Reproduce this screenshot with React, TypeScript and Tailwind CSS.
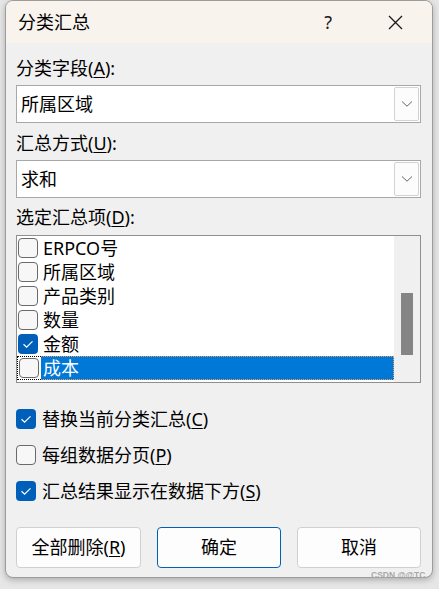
import React from "react";

const FONT = "font-['Segoe_UI','Noto_Sans','Noto_Sans_CJK_SC',sans-serif]";

function Check({ checked }: { checked: boolean }) {
  if (checked) {
    return (
      <div className="w-[20px] h-[20px] rounded-[4px] bg-[#005fb8] flex items-center justify-center shrink-0">
        <svg width="20" height="20" viewBox="0 0 20 20">
          <path d="M5.5 10.2 L8.6 13.2 L14.5 7.3" fill="none" stroke="#ffffff" strokeWidth="1.2" />
        </svg>
      </div>
    );
  }
  return <div className="w-[20px] h-[20px] rounded-[4px] border border-[#6a6a6a] bg-[#f7f7f7] shrink-0" />;
}

function Select({ value }: { value: string }) {
  return (
    <div className="h-[38px] border border-[#a8a8a8] bg-white flex items-center">
      <span className="pl-[4px] text-[18px] leading-[24px] text-black">{value}</span>
      <div className="ml-auto mr-[1px] w-[25px] h-[34px] border border-[#d2d2d2] rounded-[2px] bg-[#fcfcfc] flex items-center justify-center">
        <svg width="12" height="8" viewBox="0 0 12 8">
          <path d="M1 1.5 L6 6.2 L11 1.5" fill="none" stroke="#666" strokeWidth="1" />
        </svg>
      </div>
    </div>
  );
}

function Label({ text, key1, suffix }: { text: string; key1: string; suffix: string }) {
  return (
    <div className="h-[24px] text-[18px] leading-[24px] text-black">
      {text}(<span className="underline underline-offset-2">{key1}</span>){suffix}
    </div>
  );
}

const items = ["ERPCO号", "所属区域", "产品类别", "数量", "金额", "成本"];

export default function App() {
  return (
    <div className={`${FONT} w-[439px] h-[589px] bg-[#e6e6e6] relative overflow-hidden`}>
      <div className="ml-[5px] w-[428px] h-[578px] bg-[#f0f0f0] border border-[#9c9c9c] rounded-[8px] overflow-hidden flex flex-col shadow-[0_2px_6px_rgba(0,0,0,0.25)]">
        <div className="h-[42px] bg-[#f8f3ed] flex items-center shrink-0">
          <span className="ml-[12px] text-[18px] leading-[24px] text-black">分类汇总</span>
          <span className="ml-auto mr-[56px] text-[18px] leading-[24px] text-[#1a1a1a]">?</span>
          <svg className="mr-[29px]" width="15" height="15" viewBox="0 0 15 15">
            <path d="M1 1 L14 14 M14 1 L1 14" stroke="#1a1a1a" strokeWidth="1.3" />
          </svg>
        </div>
        <div className="pl-[10px] pr-[11px] flex flex-col">
          <div className="mt-[13px]">
            <Label text="分类字段" key1="A" suffix=":" />
          </div>
          <div className="mt-[5px]">
            <Select value="所属区域" />
          </div>
          <div className="mt-[8px]">
            <Label text="汇总方式" key1="U" suffix=":" />
          </div>
          <div className="mt-[5px]">
            <Select value="求和" />
          </div>
          <div className="mt-[7px]">
            <Label text="选定汇总项" key1="D" suffix=":" />
          </div>
          <div className="mt-[6px] h-[148px] border border-[#8f8f8f] bg-white flex">
            <div className="flex-1 flex flex-col">
              {items.map((it, i) => {
                const last = i === items.length - 1;
                if (last) {
                  return (
                    <div key={it} className="h-[24px] flex items-stretch">
                      <div className="flex items-center pl-[1px] pr-[2px] border-l border-y border-dotted border-black">
                        <Check checked={false} />
                      </div>
                      <div className="flex-1 bg-[#0078d7] flex items-center pl-[2px] border-y border-r border-dotted border-[#f0a050] text-white text-[18px] leading-[24px]">
                        {it}
                      </div>
                    </div>
                  );
                }
                return (
                  <div key={it} className="h-[24px] flex items-center pl-[1px] gap-[5px] text-[18px] leading-[24px] text-black">
                    <Check checked={i === 4} />
                    <span>{it}</span>
                  </div>
                );
              })}
            </div>
            <div className="w-[26px] bg-[#f0f0f0] flex justify-center">
              <div className="mt-[57px] w-[12px] h-[62px] bg-[#858585]" />
            </div>
          </div>
          <div className="mt-[18px] flex flex-col">
            {[
              { t: "替换当前分类汇总", k: "C", c: true },
              { t: "每组数据分页", k: "P", c: false },
              { t: "汇总结果显示在数据下方", k: "S", c: true },
            ].map((o) => (
              <div key={o.k} className="h-[36px] flex items-center gap-[6px] text-[18px] leading-[24px] text-black">
                <Check checked={o.c} />
                <span>
                  {o.t}(<span className="underline underline-offset-2">{o.k}</span>)
                </span>
              </div>
            ))}
          </div>
          <div className="mt-[18px] flex gap-[16px]">
            <button className="w-[125px] h-[41px] bg-[#fdfdfd] border border-[#d0d0d0] rounded-[4px] text-[18px] text-black">
              全部删除(<span className="underline underline-offset-2">R</span>)
            </button>
            <button className="w-[124px] h-[41px] bg-[#fdfdfd] border border-[#005fb8] rounded-[4px] text-[18px] text-black">
              确定
            </button>
            <button className="w-[124px] h-[41px] bg-[#fdfdfd] border border-[#d0d0d0] rounded-[4px] text-[18px] text-black">
              取消
            </button>
          </div>
        </div>
      </div>
      <div className="absolute left-[371px] top-[569px] text-[8.5px] leading-[12px] font-bold text-[#a8a8a8] font-['Liberation_Sans',sans-serif]">
        CSDN @@TC
      </div>
    </div>
  );
}
